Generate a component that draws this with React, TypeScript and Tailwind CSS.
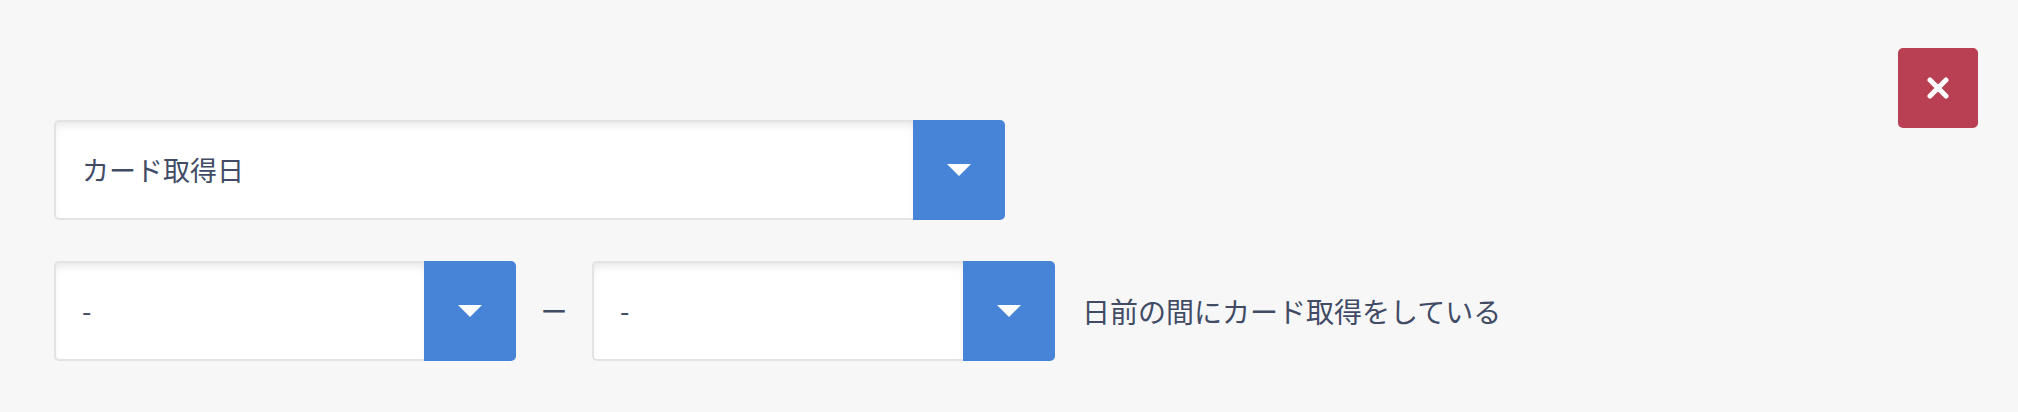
import React from 'react';

const font = { fontFamily: '"Noto Sans CJK JP", "Noto Sans", sans-serif' };

function Caret() {
  return (
    <svg width="24" height="12" viewBox="0 0 24 12" className="block">
      <polygon points="0,0 24,0 12,12" fill="#ffffff" />
    </svg>
  );
}

function SelectBox({ label, width }: { label: string; width: string }) {
  return (
    <div className={`flex h-[100px] ${width}`}>
      <div className="flex-1 flex items-center pl-[26px] bg-white border-2 border-r-0 border-[#e3e3e3] rounded-l-[5px] shadow-[inset_0_6px_8px_-3px_rgba(0,0,0,0.1)] text-[27px] text-[#414b66]">
        {label}
      </div>
      <button className="w-[92px] h-full flex items-center justify-center bg-[#4784d8] rounded-r-[5px]">
        <Caret />
      </button>
    </div>
  );
}

export default function App() {
  return (
    <div className="relative w-full h-[412px] bg-[#f7f7f7]" style={font}>
      <button className="absolute top-[48px] right-[40px] w-[80px] h-[80px] rounded-[5px] bg-[#b94052] flex items-center justify-center">
        <svg width="22" height="22" viewBox="0 0 22 22">
          <line x1="3" y1="3" x2="19" y2="19" stroke="#fff" strokeWidth="5" strokeLinecap="round" />
          <line x1="19" y1="3" x2="3" y2="19" stroke="#fff" strokeWidth="5" strokeLinecap="round" />
        </svg>
      </button>

      <div className="flex flex-col gap-[41px] pt-[120px] pl-[54px]">
        <SelectBox label="カード取得日" width="w-[951px]" />
        <div className="flex items-center">
          <SelectBox label="-" width="w-[462px]" />
          <span className="w-[76px] text-center text-[27px] text-[#414b66]">ー</span>
          <SelectBox label="-" width="w-[463px]" />
          <span className="ml-[27px] text-[28px] text-[#414b66]">日前の間にカード取得をしている</span>
        </div>
      </div>
    </div>
  );
}
